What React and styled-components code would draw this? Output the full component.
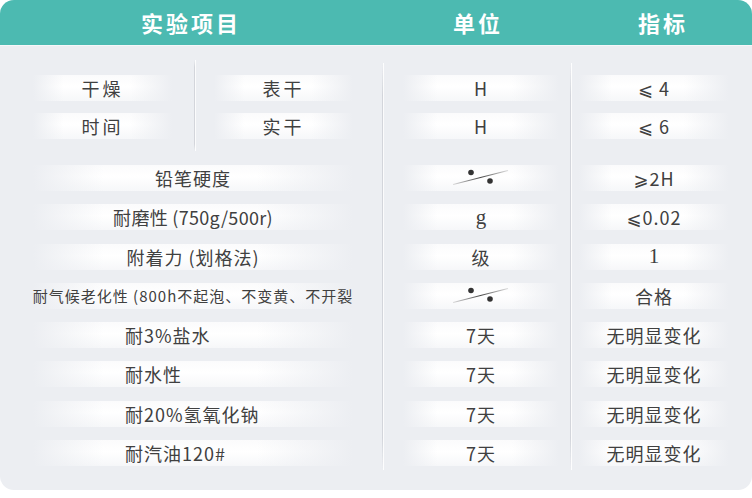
import React from 'react'
import styled, { createGlobalStyle } from 'styled-components'

const GlobalStyle = createGlobalStyle`
  html, body {
    margin: 0;
    padding: 0;
    background: #ffffff;
  }
  body {
    font-family: "Noto Sans CJK SC", "Noto Sans", "DejaVu Sans", sans-serif;
  }
`

const Panel = styled.div`
  width: 752px;
  color: #404040;
`

const Header = styled.div`
  display: grid;
  grid-template-columns: 382px 192px 178px;
  height: 45px;
  background: #4cbab1;
  border-radius: 14px 14px 0 0;
`

const HeadCell = styled.div`
  display: flex;
  align-items: center;
  justify-content: center;
  color: #ffffff;
  font-size: 22px;
  font-weight: 700;
  letter-spacing: 3px;
  padding-bottom: 2px;
`

const Body = styled.div`
  display: flex;
  background: #eceef2;
  border-radius: 0 0 14px 14px;
  padding: 15px 0 20px;
  box-shadow: inset 0 1px 0 #f6f7f9;
`

const Column = styled.div`
  width: ${p => p.$width}px;
  box-sizing: border-box;
  padding: 15px ${p => p.$right}px 4px ${p => p.$left}px;
  display: flex;
  flex-direction: column;
  gap: 26px;
`

const Divider = styled.div`
  width: 1px;
  flex: none;
  margin-top: 3px;
  background: linear-gradient(to bottom, rgba(210, 212, 218, 0) 0%, #d3d5db 8%, #d3d5db 92%, rgba(210, 212, 218, 0) 100%);
  border-right: 1px solid rgba(255, 255, 255, 0.9);
`

const SubDivider = styled(Divider)`
  margin: -15px 0 -12px;
`

const Group = styled.div`
  display: flex;
`

const SubColumn = styled.div`
  flex: 1;
  display: flex;
  flex-direction: column;
  gap: 12px;
  padding: 0 ${p => p.$right}px 0 ${p => p.$left}px;
`

const Section = styled.div`
  display: flex;
  flex-direction: column;
  gap: ${p => p.$gap}px;
`

const Bar = styled.div`
  height: 26px;
  display: flex;
  align-items: center;
  justify-content: ${p => (p.$align === 'left' ? 'flex-start' : 'center')};
  padding-left: ${p => (p.$align === 'left' ? '92px' : '0')};
  font-size: ${p => p.$size || 18}px;
  letter-spacing: ${p => p.$spacing ?? 1}px;
  line-height: 1;
  white-space: nowrap;
  background:
    linear-gradient(90deg, rgba(236, 238, 242, 1) 0%, rgba(255, 255, 255, 0) 22%, rgba(255, 255, 255, 0) 70%, rgba(236, 238, 242, 1) 100%),
    linear-gradient(to bottom, #fbfbfc 0%, #ffffff 45%, #f6f7f9 100%);
`

const Serif = styled.span`
  font-family: "Liberation Serif", "DejaVu Serif", serif;
  font-size: 21px;
  letter-spacing: 0;
`

const Slash = () => (
  <svg width="56" height="18" viewBox="0 0 56 18">
    <defs>
      <linearGradient id="slashLine" x1="0" y1="0" x2="1" y2="0">
        <stop offset="0" stopColor="#555" stopOpacity="0.2" />
        <stop offset="0.5" stopColor="#444" stopOpacity="1" />
        <stop offset="1" stopColor="#555" stopOpacity="0.2" />
      </linearGradient>
    </defs>
    <line x1="0" y1="15.5" x2="55" y2="1.5" stroke="url(#slashLine)" strokeWidth="1.2" />
    <circle cx="18" cy="3.5" r="2.8" fill="#333" />
    <circle cx="37" cy="12" r="2.8" fill="#333" />
  </svg>
)

const items = [
  { name: '铅笔硬度', unit: <Slash />, spec: '⩾2H' },
  { name: '耐磨性 (750g/500r)', spacing: 0.3, unit: <Serif>g</Serif>, spec: '⩽0.02' },
  { name: '附着力 (划格法)', unit: '级', spec: <Serif>1</Serif> },
  { name: '耐气候老化性 (800h不起泡、不变黄、不开裂', size: 15, unit: <Slash />, spec: '合格' },
  { name: '耐3%盐水', align: 'left', unit: '7天', spec: '无明显变化' },
  { name: '耐水性', align: 'left', unit: '7天', spec: '无明显变化' },
  { name: '耐20%氢氧化钠', align: 'left', unit: '7天', spec: '无明显变化' },
  { name: '耐汽油120#', align: 'left', unit: '7天', spec: '无明显变化' },
]

const drying = [
  { kind: '表干', unit: 'H', spec: '⩽ 4' },
  { kind: '实干', unit: 'H', spec: '⩽ 6' },
]

const App = () => {
  return (
    <Panel>
      <GlobalStyle />

      {/* HEADER */}
      <Header>
        <HeadCell>实验项目</HeadCell>
        <HeadCell>单位</HeadCell>
        <HeadCell>指标</HeadCell>
      </Header>

      <Body>
        {/* ITEMS */}
        <Column $width={382} $left={33} $right={29}>
          <Group>
            <SubColumn $left={0} $right={22}>
              <Bar $spacing={3}>干燥</Bar>
              <Bar $spacing={3}>时间</Bar>
            </SubColumn>
            <SubDivider />
            <SubColumn $left={18} $right={0}>
              {drying.map(d => <Bar key={d.kind} $spacing={3}>{d.kind}</Bar>)}
            </SubColumn>
          </Group>
          <Section $gap={13.3}>
            {items.map(it => (
              <Bar key={it.name} $align={it.align} $size={it.size} $spacing={it.spacing}>{it.name}</Bar>
            ))}
          </Section>
        </Column>

        <Divider />

        {/* UNITS */}
        <Column $width={186} $left={19} $right={11}>
          <Section $gap={12}>
            {drying.map(d => <Bar key={d.kind}>{d.unit}</Bar>)}
          </Section>
          <Section $gap={13.3}>
            {items.map(it => <Bar key={it.name}>{it.unit}</Bar>)}
          </Section>
        </Column>

        <Divider />

        {/* SPECS */}
        <Column $width={180} $left={7} $right={23}>
          <Section $gap={12}>
            {drying.map(d => <Bar key={d.kind}>{d.spec}</Bar>)}
          </Section>
          <Section $gap={13.3}>
            {items.map(it => <Bar key={it.name}>{it.spec}</Bar>)}
          </Section>
        </Column>
      </Body>
    </Panel>
  )
}

export default App
